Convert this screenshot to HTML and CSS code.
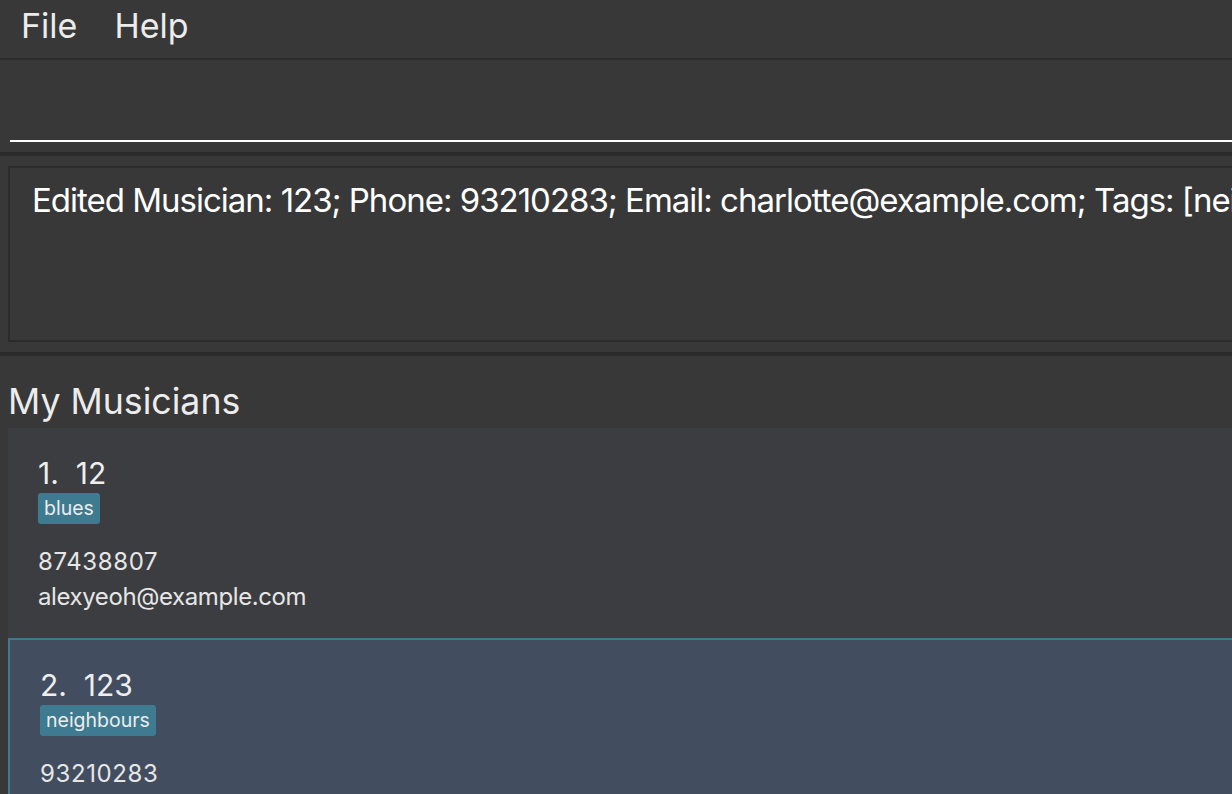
FILE: index.html
```html
<!DOCTYPE html>
<html lang="en">
<head>
<meta charset="utf-8">
<title>Musicians</title>
<link rel="stylesheet" href="styles.css">
</head>
<body>
<div class="app">
  <nav class="menubar">
    <span class="menu-item">File</span>
    <span class="menu-item">Help</span>
  </nav>
  <div class="command-pane">
    <div class="command-input"></div>
  </div>
  <div class="result-pane">
    <div class="result-box">Edited Musician: 123; Phone: 93210283; Email: charlotte@example.com; Tags: [neighbours]</div>
  </div>
  <section class="list-pane">
    <h1 class="list-title">My Musicians</h1>
    <div class="list">
      <div class="card">
        <div class="card-name">1.&nbsp; 12</div>
        <div class="tags"><span class="tag">blues</span></div>
        <div class="card-line phone">87438807</div>
        <div class="card-line email">alexyeoh@example.com</div>
      </div>
      <div class="card selected">
        <div class="card-name">2.&nbsp; 123</div>
        <div class="tags"><span class="tag">neighbours</span></div>
        <div class="card-line phone">93210283</div>
        <div class="card-line email">charlotte@example.com</div>
      </div>
    </div>
  </section>
</div>
</body>
</html>
```

FILE: styles.css
```css
html, body {
  margin: 0;
  padding: 0;
}
body {
  background: #383838;
  font-family: Inter, "Open Sans", sans-serif;
  color: #eeeeee;
  width: 1232px;
  height: 794px;
  overflow: hidden;
}
.app {
  display: flex;
  flex-direction: column;
  width: 1232px;
  overflow: hidden;
}
.menubar {
  height: 58px;
  border-bottom: 2px solid #2b2b2b;
  display: flex;
  padding-left: 21px;
  gap: 37px;
  box-sizing: content-box;
}
.menu-item {
  font-size: 34px;
  line-height: 52px;
  color: #ececec;
}
.command-pane {
  height: 96px;
  padding-left: 10px;
  box-sizing: border-box;
  border-bottom: 4px solid #2b2b2b;
  display: flex;
  align-items: flex-start;
}
.command-input {
  margin-top: 80px;
  height: 2px;
  background: #ffffff;
  flex: 1;
}
.result-pane {
  height: 200px;
  box-sizing: border-box;
  padding: 10px 0 10px 8px;
  border-bottom: 4px solid #2b2b2b;
  display: flex;
}
.result-box {
  flex: 1;
  border: 2px solid #2b2b2b;
  border-right: none;
  padding: 12px 0 0 22px;
  font-size: 33px;
  letter-spacing: -1px;
  line-height: 40px;
  color: #ffffff;
  white-space: nowrap;
  overflow: hidden;
}
.list-pane {
  display: flex;
  flex-direction: column;
}
.list-title {
  margin: 0;
  padding: 23px 0 5px 8px;
  font-weight: 400;
  font-size: 35.7px;
  line-height: 44px;
  color: #ececec;
}
.list {
  margin-left: 8px;
  display: flex;
  flex-direction: column;
}
.card {
  background: #3c3d40;
  height: 210px;
  padding: 30px 0 0 30px;
  box-sizing: border-box;
  color: #e6e6e6;
}
.card.selected {
  background: #424d5f;
  border: 2px solid #3e7b91;
  border-right: none;
  height: 300px;
}
.card-name {
  font-size: 30px;
  line-height: 30px;
  color: #eeeeee;
}
.tags {
  display: flex;
  gap: 6px;
  margin-top: 5px;
}
.tag {
  background: #3e7b91;
  border-radius: 3px;
  padding: 0 6px;
  font-size: 19.5px;
  line-height: 31px;
  color: #ececec;
}
.card-line {
  font-size: 24px;
  line-height: 35px;
}
.card-line.phone {
  margin-top: 20px;
  letter-spacing: 0.6px;
}
.card-line.email {
  letter-spacing: -0.4px;
}
```
